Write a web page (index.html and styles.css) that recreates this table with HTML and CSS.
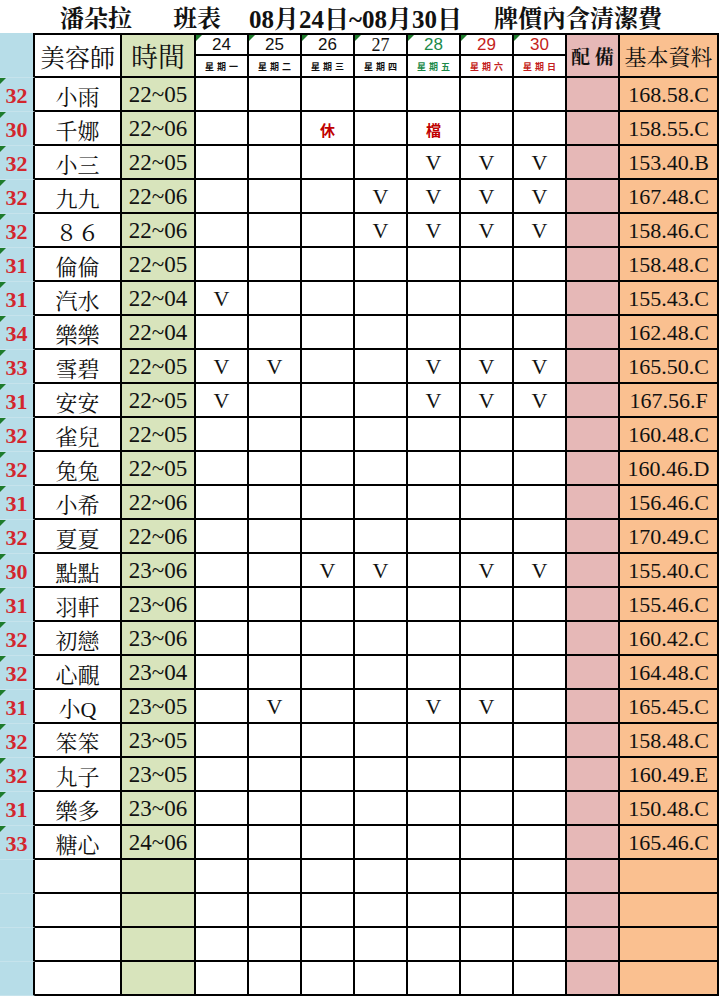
FILE: index.html
```html
<!DOCTYPE html>
<html lang="zh-Hant">
<head>
<meta charset="utf-8">
<title>潘朵拉 班表</title>
<link rel="stylesheet" href="styles.css">
</head>
<body>
<div class="sheet">
  <div class="title">
    <span class="t1">潘朵拉</span>
    <span class="t2">班表</span>
    <span class="t3">08月24日~08月30日</span>
    <span class="t4">牌價內含清潔費</span>
  </div>

  <div class="c idx hdidx"></div>
  <div class="c hd nmh">美容師</div>
  <div class="c hd tm tmh">時間</div>
  <div class="c hd dh flag"><div class="dn">24</div><div class="dd">星期一</div></div>
  <div class="c hd dh flag"><div class="dn">25</div><div class="dd">星期二</div></div>
  <div class="c hd dh flag"><div class="dn">26</div><div class="dd">星期三</div></div>
  <div class="c hd dh flag"><div class="dn serif">27</div><div class="dd">星期四</div></div>
  <div class="c hd dh flag green"><div class="dn">28</div><div class="dd">星期五</div></div>
  <div class="c hd dh flag red"><div class="dn">29</div><div class="dd">星期六</div></div>
  <div class="c hd dh flag red"><div class="dn">30</div><div class="dd">星期日</div></div>
  <div class="c hd pb pbh">配 備</div>
  <div class="c hd jb jbh">基本資料</div>

  <!-- 1 -->
  <div class="c idx flag">32</div><div class="c nm">小雨</div><div class="c tm">22~05</div>
  <div class="c"></div><div class="c"></div><div class="c"></div><div class="c"></div><div class="c"></div><div class="c"></div><div class="c"></div>
  <div class="c pb"></div><div class="c jb">168.58.C</div>
  <!-- 2 -->
  <div class="c idx flag">30</div><div class="c nm">千娜</div><div class="c tm">22~06</div>
  <div class="c"></div><div class="c"></div><div class="c note">休</div><div class="c"></div><div class="c note">檔</div><div class="c"></div><div class="c"></div>
  <div class="c pb"></div><div class="c jb">158.55.C</div>
  <!-- 3 -->
  <div class="c idx flag">32</div><div class="c nm">小三</div><div class="c tm">22~05</div>
  <div class="c"></div><div class="c"></div><div class="c"></div><div class="c"></div><div class="c v">V</div><div class="c v">V</div><div class="c v">V</div>
  <div class="c pb"></div><div class="c jb">153.40.B</div>
  <!-- 4 -->
  <div class="c idx flag">32</div><div class="c nm">九九</div><div class="c tm">22~06</div>
  <div class="c"></div><div class="c"></div><div class="c"></div><div class="c v">V</div><div class="c v">V</div><div class="c v">V</div><div class="c v">V</div>
  <div class="c pb"></div><div class="c jb">167.48.C</div>
  <!-- 5 -->
  <div class="c idx flag">32</div><div class="c nm">８６</div><div class="c tm">22~06</div>
  <div class="c"></div><div class="c"></div><div class="c"></div><div class="c v">V</div><div class="c v">V</div><div class="c v">V</div><div class="c v">V</div>
  <div class="c pb"></div><div class="c jb">158.46.C</div>
  <!-- 6 -->
  <div class="c idx flag">31</div><div class="c nm">倫倫</div><div class="c tm">22~05</div>
  <div class="c"></div><div class="c"></div><div class="c"></div><div class="c"></div><div class="c"></div><div class="c"></div><div class="c"></div>
  <div class="c pb"></div><div class="c jb">158.48.C</div>
  <!-- 7 -->
  <div class="c idx flag">31</div><div class="c nm">汽水</div><div class="c tm">22~04</div>
  <div class="c v">V</div><div class="c"></div><div class="c"></div><div class="c"></div><div class="c"></div><div class="c"></div><div class="c"></div>
  <div class="c pb"></div><div class="c jb">155.43.C</div>
  <!-- 8 -->
  <div class="c idx flag">34</div><div class="c nm">樂樂</div><div class="c tm">22~04</div>
  <div class="c"></div><div class="c"></div><div class="c"></div><div class="c"></div><div class="c"></div><div class="c"></div><div class="c"></div>
  <div class="c pb"></div><div class="c jb">162.48.C</div>
  <!-- 9 -->
  <div class="c idx flag">33</div><div class="c nm">雪碧</div><div class="c tm">22~05</div>
  <div class="c v">V</div><div class="c v">V</div><div class="c"></div><div class="c"></div><div class="c v">V</div><div class="c v">V</div><div class="c v">V</div>
  <div class="c pb"></div><div class="c jb">165.50.C</div>
  <!-- 10 -->
  <div class="c idx flag">31</div><div class="c nm">安安</div><div class="c tm">22~05</div>
  <div class="c v">V</div><div class="c"></div><div class="c"></div><div class="c"></div><div class="c v">V</div><div class="c v">V</div><div class="c v">V</div>
  <div class="c pb"></div><div class="c jb">167.56.F</div>
  <!-- 11 -->
  <div class="c idx flag">32</div><div class="c nm">雀兒</div><div class="c tm">22~05</div>
  <div class="c"></div><div class="c"></div><div class="c"></div><div class="c"></div><div class="c"></div><div class="c"></div><div class="c"></div>
  <div class="c pb"></div><div class="c jb">160.48.C</div>
  <!-- 12 -->
  <div class="c idx flag">32</div><div class="c nm">兔兔</div><div class="c tm">22~05</div>
  <div class="c"></div><div class="c"></div><div class="c"></div><div class="c"></div><div class="c"></div><div class="c"></div><div class="c"></div>
  <div class="c pb"></div><div class="c jb">160.46.D</div>
  <!-- 13 -->
  <div class="c idx flag">31</div><div class="c nm">小希</div><div class="c tm">22~06</div>
  <div class="c"></div><div class="c"></div><div class="c"></div><div class="c"></div><div class="c"></div><div class="c"></div><div class="c"></div>
  <div class="c pb"></div><div class="c jb">156.46.C</div>
  <!-- 14 -->
  <div class="c idx flag">32</div><div class="c nm">夏夏</div><div class="c tm">22~06</div>
  <div class="c"></div><div class="c"></div><div class="c"></div><div class="c"></div><div class="c"></div><div class="c"></div><div class="c"></div>
  <div class="c pb"></div><div class="c jb">170.49.C</div>
  <!-- 15 -->
  <div class="c idx flag">30</div><div class="c nm">點點</div><div class="c tm">23~06</div>
  <div class="c"></div><div class="c"></div><div class="c v">V</div><div class="c v">V</div><div class="c"></div><div class="c v">V</div><div class="c v">V</div>
  <div class="c pb"></div><div class="c jb">155.40.C</div>
  <!-- 16 -->
  <div class="c idx flag">31</div><div class="c nm">羽軒</div><div class="c tm">23~06</div>
  <div class="c"></div><div class="c"></div><div class="c"></div><div class="c"></div><div class="c"></div><div class="c"></div><div class="c"></div>
  <div class="c pb"></div><div class="c jb">155.46.C</div>
  <!-- 17 -->
  <div class="c idx flag">32</div><div class="c nm">初戀</div><div class="c tm">23~06</div>
  <div class="c"></div><div class="c"></div><div class="c"></div><div class="c"></div><div class="c"></div><div class="c"></div><div class="c"></div>
  <div class="c pb"></div><div class="c jb">160.42.C</div>
  <!-- 18 -->
  <div class="c idx flag">32</div><div class="c nm">心靦</div><div class="c tm">23~04</div>
  <div class="c"></div><div class="c"></div><div class="c"></div><div class="c"></div><div class="c"></div><div class="c"></div><div class="c"></div>
  <div class="c pb"></div><div class="c jb">164.48.C</div>
  <!-- 19 -->
  <div class="c idx flag">31</div><div class="c nm">小Q</div><div class="c tm">23~05</div>
  <div class="c"></div><div class="c v">V</div><div class="c"></div><div class="c"></div><div class="c v">V</div><div class="c v">V</div><div class="c"></div>
  <div class="c pb"></div><div class="c jb">165.45.C</div>
  <!-- 20 -->
  <div class="c idx flag">32</div><div class="c nm">笨笨</div><div class="c tm">23~05</div>
  <div class="c"></div><div class="c"></div><div class="c"></div><div class="c"></div><div class="c"></div><div class="c"></div><div class="c"></div>
  <div class="c pb"></div><div class="c jb">158.48.C</div>
  <!-- 21 -->
  <div class="c idx flag">32</div><div class="c nm">丸子</div><div class="c tm">23~05</div>
  <div class="c"></div><div class="c"></div><div class="c"></div><div class="c"></div><div class="c"></div><div class="c"></div><div class="c"></div>
  <div class="c pb"></div><div class="c jb">160.49.E</div>
  <!-- 22 -->
  <div class="c idx flag">31</div><div class="c nm">樂多</div><div class="c tm">23~06</div>
  <div class="c"></div><div class="c"></div><div class="c"></div><div class="c"></div><div class="c"></div><div class="c"></div><div class="c"></div>
  <div class="c pb"></div><div class="c jb">150.48.C</div>
  <!-- 23 -->
  <div class="c idx flag">33</div><div class="c nm">糖心</div><div class="c tm">24~06</div>
  <div class="c"></div><div class="c"></div><div class="c"></div><div class="c"></div><div class="c"></div><div class="c"></div><div class="c"></div>
  <div class="c pb"></div><div class="c jb">165.46.C</div>
  <!-- 24 -->
  <div class="c idx"></div><div class="c nm"></div><div class="c tm"></div>
  <div class="c"></div><div class="c"></div><div class="c"></div><div class="c"></div><div class="c"></div><div class="c"></div><div class="c"></div>
  <div class="c pb"></div><div class="c jb"></div>
  <!-- 25 -->
  <div class="c idx"></div><div class="c nm"></div><div class="c tm"></div>
  <div class="c"></div><div class="c"></div><div class="c"></div><div class="c"></div><div class="c"></div><div class="c"></div><div class="c"></div>
  <div class="c pb"></div><div class="c jb"></div>
  <!-- 26 -->
  <div class="c idx"></div><div class="c nm"></div><div class="c tm"></div>
  <div class="c"></div><div class="c"></div><div class="c"></div><div class="c"></div><div class="c"></div><div class="c"></div><div class="c"></div>
  <div class="c pb"></div><div class="c jb"></div>
  <!-- 27 -->
  <div class="c idx"></div><div class="c nm"></div><div class="c tm"></div>
  <div class="c"></div><div class="c"></div><div class="c"></div><div class="c"></div><div class="c"></div><div class="c"></div><div class="c"></div>
  <div class="c pb"></div><div class="c jb"></div>
</div>
</body>
</html>
```

FILE: styles.css
```css
* {
  box-sizing: border-box;
}

html, body {
  margin: 0;
  padding: 0;
  background: #ffffff;
}

.sheet {
  display: grid;
  grid-template-columns: 35px 87px 74px repeat(8, 53px) 99px;
  grid-template-rows: 33px 45px repeat(27, 34px);
  width: 719px;
  font-family: "Liberation Serif", "Noto Serif CJK TC", "Noto Sans CJK TC", serif;
  color: #111;
}

.title {
  grid-column: 1 / -1;
  display: flex;
  align-items: center;
  padding-left: 60px;
  font-weight: bold;
  font-size: 24px;
  white-space: nowrap;
}

.t2 { margin-left: 41px; }
.t3 { margin-left: 28px; font-size: 25px; }
.t4 { margin-left: 32px; }

.c {
  position: relative;
  display: flex;
  align-items: center;
  justify-content: center;
  border-right: 2px solid #000;
  border-bottom: 2px solid #000;
  font-size: 22px;
  white-space: nowrap;
  padding-top: 2px;
}

.hd {
  border-top: 2px solid #000;
  padding-top: 0;
}

.idx {
  background: #b7dde8;
  border-bottom: 1px solid #c6e3ec;
  color: #d3262d;
  font-weight: bold;
  font-size: 22px;
}

.hdidx {
  border-bottom: 1px solid #c6e3ec;
}

.flag::before {
  content: "";
  position: absolute;
  left: 0;
  top: 0;
  border-top: 6px solid #1e7b2c;
  border-right: 6px solid transparent;
}

.nm {
  font-size: 22px;
}

.nmh {
  font-size: 25px;
}

.tm {
  background: #d8e4bc;
  font-size: 23px;
}

.tmh {
  font-size: 27px;
}

.pb {
  background: #e6b8b7;
}

.pbh {
  font-weight: bold;
  font-size: 19px;
}

.jb {
  background: #fac090;
  font-size: 22px;
}

.jbh {
  font-size: 22px;
}

.dh {
  flex-direction: column;
  align-items: stretch;
  justify-content: flex-start;
}

.dn {
  height: 21px;
  border-bottom: 2px solid #000;
  font-family: "Liberation Sans", sans-serif;
  font-size: 17px;
  line-height: 20px;
  text-align: center;
}

.dn.serif {
  font-family: "Liberation Serif", serif;
  font-size: 18px;
}

.dd {
  flex: 1;
  display: flex;
  align-items: center;
  justify-content: center;
  font-family: "Noto Sans CJK TC", sans-serif;
  font-size: 9px;
  font-weight: bold;
  letter-spacing: 3px;
  padding-left: 3px;
}

.green { color: #1c8a4a; }
.red { color: #c41e20; }

.v {
  font-size: 22px;
}

.note {
  color: #c00000;
  font-weight: bold;
  font-size: 15px;
  font-family: "Noto Sans CJK TC", sans-serif;
}
```
